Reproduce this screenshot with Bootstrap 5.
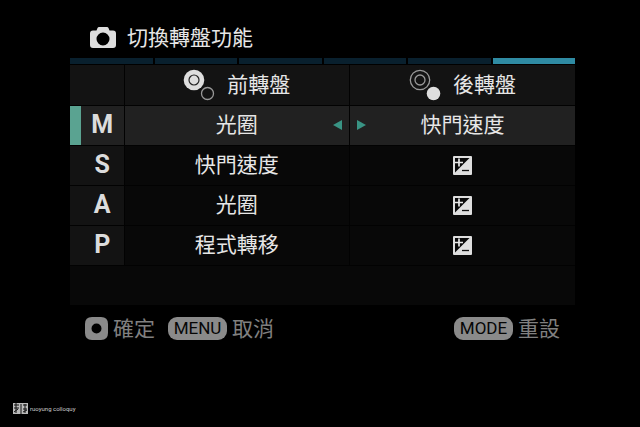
<!DOCTYPE html>
<html lang="zh-Hant">
<head>
<meta charset="utf-8">
<meta name="viewport" content="width=device-width, initial-scale=1">
<title>切換轉盤功能</title>
<link href="https://cdn.jsdelivr.net/npm/bootstrap@5.3.0/dist/css/bootstrap.min.css" rel="stylesheet">
<style>
body{background:#000;color:#e6e6e6;font-family:Roboto,"Noto Sans CJK TC",sans-serif;font-size:21px;line-height:24px}
.screen{padding:24px 65px 0 70px}
.title-bar{height:28px;padding-left:20px;gap:11px;margin-bottom:6px}
.title-bar h1{font-size:21px;line-height:28px;font-weight:400}
.tabs{gap:2px;margin-bottom:1px}
.tabs button{height:6px;background:#09202e;flex:1 1 0}
.tabs button.on{background:#2f8ba3}
.panel{background:#080808;padding-bottom:39px}
.dials{table-layout:fixed;border-collapse:collapse}
.dials th,.dials td{height:40px;padding:0;font-weight:400;text-align:center;vertical-align:middle;border:solid #020202;border-width:0 0 1px 1px}
.dials th:first-child,.dials td:first-child{width:54px;border-left:0}
.dials thead th,.dials thead td{background:#131313}
.dials tbody th{background:#131313;font-weight:700;font-size:25px;padding-left:11px;color:#dcdcdc}
.dials .picked th{background:linear-gradient(90deg,#5aa391 11px,#212121 11px)}
.dials .picked td{background:#212121}
.arrow{color:#399484;width:10px;height:12px}
.arrow svg{display:block}
.ends{width:16px}
.hints{padding:12px 15px 0 15px;color:#808080}
.hints button{color:inherit;gap:5px}
.hints .menu{margin-left:13px}
.key{background:#8a8a8a;color:#060606;border-radius:9px;font-size:17px;line-height:23px;width:59px}
.mark-line{padding:61px 13px 0;font-size:6px;line-height:14px;gap:2px;color:#ccc;font-family:Roboto,"Noto Sans CJK TC",sans-serif}
</style>
<script src="https://cdn.jsdelivr.net/npm/bootstrap@5.3.0/dist/js/bootstrap.bundle.min.js"></script>
</head>
<body>
<svg class="d-none">
<symbol id="ev" viewBox="0 0 19 19"><rect width="19" height="19" rx="1" fill="#dedede"/><path d="M2 2H16.500L2 16.500Z" fill="#090909"/><path d="M2 6.500h8M6 2.500v8" stroke="#e8e8e8" stroke-width="1.700"/><path d="M9 14.500h7" stroke="#111" stroke-width="1.300"/></symbol>
</svg>
<main class="screen">
<header class="title-bar d-flex align-items-center">
<svg width="26" height="22" viewBox="0 0 26 22" aria-hidden="true"><path fill="#dedede" fill-rule="evenodd" d="M9 0h8q1 0 1.500 1l1 2.500H23q3 0 3 3V18q0 3-3 3H3q-3 0-3-3V6.500q0-3 3-3h3.500l1-2.500Q8 0 9 0ZM13 5.500a6.500 6.500 0 1 0 0 13a6.500 6.500 0 0 0 0-13Z"/></svg>
<h1 class="m-0">切換轉盤功能</h1>
</header>
<nav class="tabs d-flex" aria-label="頁">
<button class="border-0 p-0" aria-label="1"></button><button class="border-0 p-0" aria-label="2"></button><button class="border-0 p-0" aria-label="3"></button><button class="border-0 p-0" aria-label="4"></button><button class="border-0 p-0" aria-label="5"></button><button class="border-0 p-0 on" aria-label="6"></button>
</nav>
<section class="panel">
<table class="dials w-100">
<thead><tr><td></td>
<th scope="col"><div class="d-flex justify-content-center align-items-center gap-2"><svg width="36" height="32" viewBox="0 0 36 32" aria-hidden="true"><circle cx="11" cy="11" r="10.300" fill="#dedede"/><circle cx="11" cy="11" r="5" fill="none" stroke="#222" stroke-width="1.200"/><circle cx="24.500" cy="24.500" r="6" fill="none" stroke="#999" stroke-width="1.300"/></svg>前轉盤</div></th>
<th scope="col"><div class="d-flex justify-content-center align-items-center gap-2"><svg width="36" height="32" viewBox="0 0 36 32" aria-hidden="true"><circle cx="11" cy="11" r="9.700" fill="none" stroke="#999" stroke-width="1.300"/><circle cx="11" cy="11" r="5" fill="none" stroke="#999" stroke-width="1.300"/><circle cx="24.500" cy="24.500" r="6.800" fill="#dedede"/></svg>後轉盤</div></th></tr></thead>
<tbody>
<tr class="picked"><th scope="row">M</th>
<td><div class="d-flex align-items-center"><span class="ends"></span><span class="flex-fill">光圈</span><span class="ends"><button class="arrow btn p-0 border-0 d-block" aria-label="前"><svg width="10" height="12"><path d="M9 1v10L0 6Z" fill="currentColor"/></svg></button></span></div></td>
<td><div class="d-flex align-items-center"><span class="ends d-flex justify-content-end"><button class="arrow btn p-0 border-0" aria-label="後"><svg width="10" height="12"><path d="M1 1v10l9-5Z" fill="currentColor"/></svg></button></span><span class="flex-fill">快門速度</span><span class="ends"></span></div></td></tr>
<tr><th scope="row">S</th><td>快門速度</td><td><svg class="d-block mx-auto" width="19" height="19" role="img" aria-label="±"><use href="#ev"/></svg></td></tr>
<tr><th scope="row">A</th><td>光圈</td><td><svg class="d-block mx-auto" width="19" height="19" role="img" aria-label="±"><use href="#ev"/></svg></td></tr>
<tr><th scope="row">P</th><td>程式轉移</td><td><svg class="d-block mx-auto" width="19" height="19" role="img" aria-label="±"><use href="#ev"/></svg></td></tr>
</tbody>
</table>
</section>
<footer class="hints d-flex align-items-center">
<button class="bg-transparent border-0 p-0 d-flex align-items-center"><svg width="23" height="23" aria-hidden="true"><path fill="#8a8a8a" fill-rule="evenodd" d="M7 0h9q7 0 7 7v9q0 7-7 7H7q-7 0-7-7V7q0-7 7-7ZM11.500 6.500a5 5 0 1 0 0 10a5 5 0 0 0 0-10Z"/></svg>確定</button>
<button class="menu bg-transparent border-0 p-0 d-flex align-items-center"><span class="key">MENU</span>取消</button>
<button class="ms-auto bg-transparent border-0 p-0 d-flex align-items-center"><span class="key">MODE</span>重設</button>
</footer>
</main>
<div class="mark-line d-flex align-items-center"><svg width="15" height="14" aria-hidden="true"><path d="M0 1h15v11H0Z" fill="#bbb"/><path d="M1 3h5M3 1v10M1 6h5M1 10l4-3M8 2v10M10 3h4M12 2v9M10 7h4M10 10l4-2" stroke="#111" fill="none"/></svg><span>ruoyung colloquy</span></div>
</body>
</html>
